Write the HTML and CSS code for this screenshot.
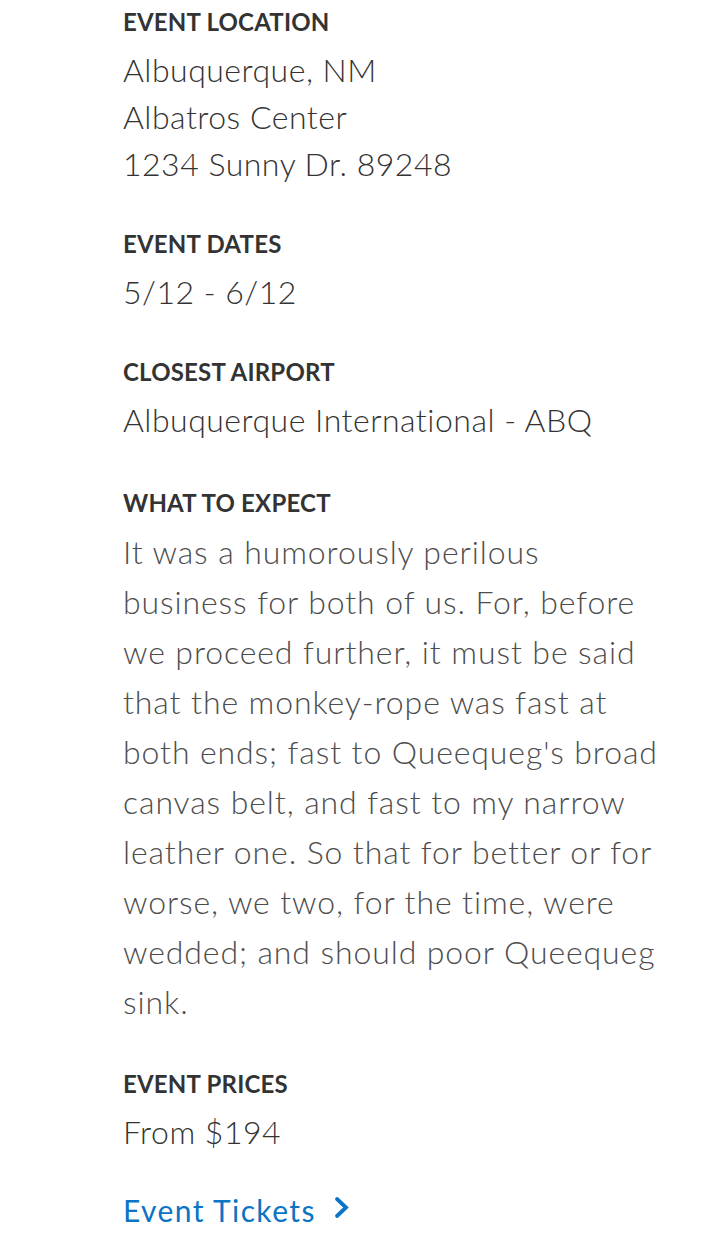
FILE: index.html
```html
<!DOCTYPE html>
<html>
<head>
<meta charset="utf-8">
<link rel="stylesheet" href="styles.css">
</head>
<body>
<main class="details">
  <section class="block">
    <h3 class="label">EVENT LOCATION</h3>
    <p class="value">Albuquerque, NM<br>Albatros Center<br>1234 Sunny Dr. 89248</p>
  </section>
  <section class="block">
    <h3 class="label">EVENT DATES</h3>
    <p class="value">5/12 - 6/12</p>
  </section>
  <section class="block">
    <h3 class="label">CLOSEST AIRPORT</h3>
    <p class="value">Albuquerque International - ABQ</p>
  </section>
  <section class="block expect">
    <h3 class="label">WHAT TO EXPECT</h3>
    <p class="value text">It was a humorously perilous<br>business for both of us. For, before<br>we proceed further, it must be said<br>that the monkey-rope was fast at<br>both ends; fast to Queequeg's broad<br>canvas belt, and fast to my narrow<br>leather one. So that for better or for<br>worse, we two, for the time, were<br>wedded; and should poor Queequeg<br>sink.</p>
  </section>
  <section class="block">
    <h3 class="label">EVENT PRICES</h3>
    <p class="value">From $194</p>
  </section>
  <a class="tickets" href="#">Event Tickets
    <svg class="chev" width="15" height="23" viewBox="0 0 15 23"><path d="M3 3 L12 11.5 L3 20" fill="none" stroke="currentColor" stroke-width="3.8" stroke-linecap="round" stroke-linejoin="miter"/></svg>
  </a>
</main>
</body>
</html>
```

FILE: styles.css
```css
html, body {
  margin: 0;
  padding: 0;
  background: #ffffff;
}
body {
  font-family: Lato, "Noto Sans", sans-serif;
  color: #333333;
}
.details {
  padding: 8px 0 0 123px;
  width: 580px;
  display: flex;
  flex-direction: column;
  align-items: flex-start;
  gap: 43px;
}
.block {
  display: flex;
  flex-direction: column;
  gap: 10px;
}
.expect {
  margin-top: 3px;
}
.label {
  margin: 0;
  font-size: 24px;
  line-height: 28px;
  font-weight: 700;
  letter-spacing: 0.2px;
  color: #333333;
}
.value {
  margin: 0;
  font-size: 32px;
  line-height: 47px;
  font-weight: 300;
  letter-spacing: 0.5px;
  color: #333333;
}
.text {
  line-height: 50px;
  letter-spacing: 0.9px;
  white-space: nowrap;
  color: #4d4d4d;
}
.tickets {
  margin-top: -2px;
  display: flex;
  align-items: center;
  gap: 18px;
  font-size: 30px;
  line-height: 28px;
  letter-spacing: 1.4px;
  color: #0b74c4;
  text-decoration: none;
}
.chev {
  display: block;
  margin-top: -5px;
}
```
